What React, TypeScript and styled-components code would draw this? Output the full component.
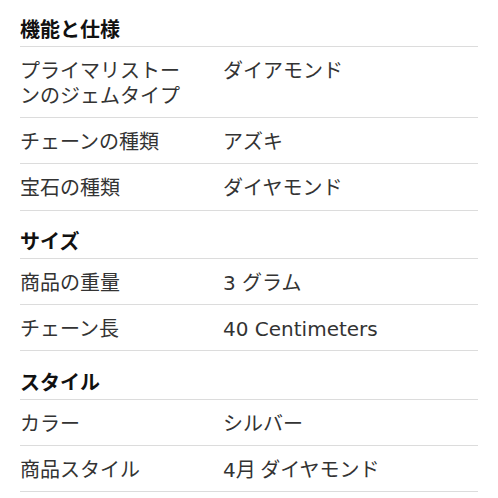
import React from "react";
import styled, { createGlobalStyle } from "styled-components";

const GlobalStyle = createGlobalStyle`
  html, body {
    margin: 0;
    padding: 0;
    background: #fff;
  }
  body {
    font-family: "Noto Sans CJK JP", "Liberation Sans", sans-serif;
    -webkit-font-smoothing: antialiased;
  }
`;

const Page = styled.div`
  width: 498px;
  padding: 0 20px;
  box-sizing: border-box;
`;

const SectionTitle = styled.div`
  padding: 17.5px 0 5px;
  font-size: 20px;
  line-height: 25px;
  font-weight: 700;
  color: #111;
  border-bottom: 1px solid #dcdcdc;

  &:first-child {
    padding-top: 16px;
  }
`;

const Row = styled.div`
  display: flex;
  align-items: flex-start;
  padding: 10px 0 10.2px;
  border-bottom: 1px solid #dcdcdc;
  font-size: 20px;
  line-height: 25px;
  color: #333;
`;

const Label = styled.div`
  flex: 0 0 203px;
  box-sizing: border-box;
  padding-right: 30px;
`;

const Value = styled.div`
  flex: 1;
`;

// latin runs (numbers, units) are set wider, like the original's system font
const Latin = styled.span`
  font-family: "DejaVu Sans", "Liberation Sans", sans-serif;
  line-height: 1;
`;

const renderValue = (text: string) =>
  text
    .split(/([0-9A-Za-z]+(?: [A-Za-z]+)* ?)/)
    .map((part, i) =>
      /[0-9A-Za-z]/.test(part) ? <Latin key={i}>{part}</Latin> : part
    );

type Spec = { label: string; value: string };

const sections: { title: string; rows: Spec[] }[] = [
  {
    title: "機能と仕様",
    rows: [
      { label: "プライマリストーンのジェムタイプ", value: "ダイアモンド" },
      { label: "チェーンの種類", value: "アズキ" },
      { label: "宝石の種類", value: "ダイヤモンド" },
    ],
  },
  {
    title: "サイズ",
    rows: [
      { label: "商品の重量", value: "3 グラム" },
      { label: "チェーン長", value: "40 Centimeters" },
    ],
  },
  {
    title: "スタイル",
    rows: [
      { label: "カラー", value: "シルバー" },
      { label: "商品スタイル", value: "4月 ダイヤモンド" },
    ],
  },
];

const App = () => {
  return (
    <>
      <GlobalStyle />
      <Page>
        {sections.map((s) => (
          <React.Fragment key={s.title}>
            <SectionTitle>{s.title}</SectionTitle>
            {s.rows.map((r) => (
              <Row key={r.label}>
                <Label>{r.label}</Label>
                <Value>{renderValue(r.value)}</Value>
              </Row>
            ))}
          </React.Fragment>
        ))}
      </Page>
    </>
  );
};

export default App;
